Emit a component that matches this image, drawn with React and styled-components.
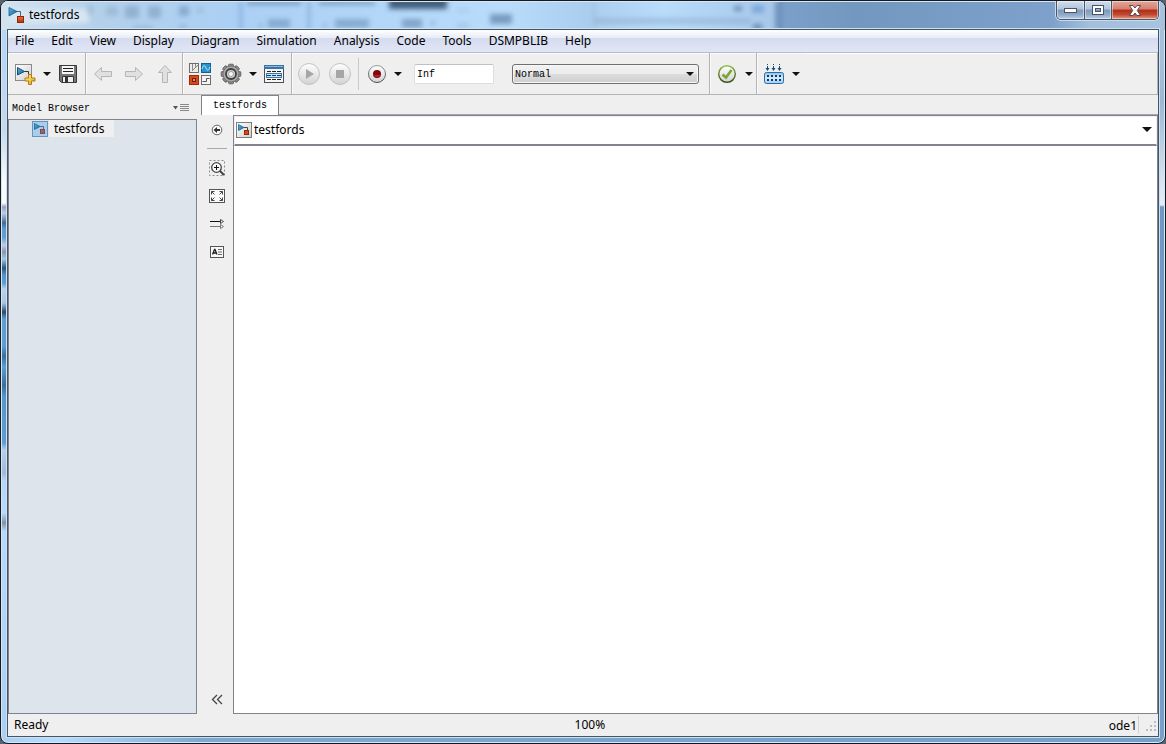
import React from "react";
import styled, { createGlobalStyle, css } from "styled-components";

const UI = `"Noto Sans", "Open Sans", sans-serif`;
const MONO = `"Liberation Mono", monospace`;
const EDGE = "#82838f";
const FACE = "#efefef";

const GlobalStyle = createGlobalStyle`
  * { box-sizing: border-box; }
  body { margin: 0; background: #5b646e; font: 12px/16px ${UI}; color: #000; }
  button, input, select { font: inherit; color: inherit; margin: 0; }
`;

const Window = styled.div`
  position: relative;
  min-height: 100vh;
  display: flex;
  flex-direction: column;
  padding: 0 6px 6px;
  border: 1px solid #17171f;
  border-radius: 8px;
  overflow: hidden;
  box-shadow: inset 0 0 0 1px #d5e8f8;
  background:
    linear-gradient(#b7d6f4 0 60px, #c4daee 130px, #fafafa 180px, #fafafa 202px, #9a9db8 206px, #b8cfe9 212px,
      #3f6c96 222px, #5c9ed4 228px, #5c9ed4 236px, #b8cfe9 244px, #8b93b0 251px, #a5c6e6 258px, #2f5679 267px,
      #5693c8 274px, #5c9ed4 282px, #b8d2ec 288px, #a8c4e2 302px, #2b4a66 311px, #5c9ed4 318px, #5c9ed4 345px,
      #3d6e99 355px, #5c9ed4 366px, #3d6e99 384px, #5596cb 396px, #5c9ed4 442px, #b7cfec 449px, #9fb9da 472px,
      #b7d6f7 480px, #b7d9fb 512px, #8292a8 522px, #b7d9fb 530px, #a9cff3) left / 7px 100% no-repeat,
    linear-gradient(#a5c0dc 0 60px, #9ab7d6 100px, #dfe8f1 190px, #e3ebf3 204px, #6f98c4 206px, #769fca) right / 7px 100% no-repeat,
    linear-gradient(90deg, #a9cff3, #b7dcff 55px, #7fa9d0 200px, #769fca) bottom / 100% 7px no-repeat,
    #a9cff3;
`;

const Backdrop = styled.svg`
  position: absolute;
  top: 0;
  left: 0;
  width: 100%;
  height: 29px;
`;

const TitleBar = styled.header`
  position: relative;
  height: 28px;
  display: flex;
  align-items: flex-start;
  justify-content: space-between;
`;

const Title = styled.h1`
  margin: 0;
  padding: 5px 0 0 1px;
  display: flex;
  align-items: center;
  gap: 4px;
  font: 12px/18px ${UI};
`;

const WindowButtons = styled.div`
  display: flex;
  height: 19px;
  border: 1px solid #4b566b;
  border-top: 0;
  border-radius: 0 0 5px 5px;
  overflow: hidden;
  box-shadow: 0 0 0 1px #c9dbec;
`;

const WindowButton = styled.button`
  width: ${(p) => (p.$close ? 47 : 27)}px;
  padding: 0;
  border: 0;
  border-left: ${(p) => (p.$first ? 0 : "1px solid #4b566b")};
  display: grid;
  place-items: center;
  background: ${(p) =>
    p.$close
      ? "linear-gradient(#e5a798, #d2806f 45%, #b32c15 50%, #c04830 75%, #e39a80)"
      : "linear-gradient(#d3dfec, #b0c4da 45%, #7e9abb 50%, #8eaac8 75%, #b9cfe4)"};
  box-shadow: inset 0 0 0 1px rgba(255, 255, 255, 0.45);
`;

const Content = styled.div`
  position: relative;
  flex: 1;
  display: flex;
  flex-direction: column;
  border: 1px solid #435566;
  background: ${FACE};
  box-shadow: 0 0 0 1px #cfe0ee;
`;

const MenuBar = styled.nav`
  height: 23px;
  display: flex;
  gap: 2px;
  border-bottom: 1px solid #b6bccc;
  background: linear-gradient(#fff, #e6ebf3 8px, #d5dbef 8px, #e1e6f6);
`;

const MenuItem = styled.button`
  padding: 0 8px 0 7px;
  border: 0;
  background: none;
  line-height: 22px;
`;

const ToolBar = styled.div`
  height: 42px;
  display: flex;
  border: 1px solid #b4b4b4;
  border-width: 0 1px 1px 0;
  box-shadow: inset 0 1px 0 #fff;
`;

const ToolGroup = styled.div`
  display: flex;
  align-items: center;
  padding: 0 1px 0 2px;
  border-right: ${(p) => (p.$last ? 0 : "1px solid #b4b4b4")};
  box-shadow: inset 1px 1px 0 #fbfbfb;
`;

const ToolButton = styled.button`
  width: ${(p) => (p.$caret ? 12 : 31)}px;
  height: 31px;
  padding: 0;
  border: 0;
  background: none;
  display: flex;
  align-items: center;
  justify-content: center;
  svg { display: block; }
`;

const ThinRule = styled.span`
  width: 1px;
  height: 32px;
  margin: 0 2px;
  background: #c9c9c9;
`;

const StopTime = styled.input`
  width: 80px;
  height: 20px;
  margin-left: 10px;
  padding: 1px 2px 0;
  border: 1px solid #dcdde2;
  border-top-color: #bfc0c8;
  border-radius: 2px;
  background: #fff;
  font: 10px/18px ${MONO};
`;

const ModeField = styled.div`
  position: relative;
  width: 187px;
  margin: 0 9px 0 18px;
  > svg { position: absolute; right: 5px; top: 8px; pointer-events: none; }
`;

const ModeSelect = styled.select`
  display: block;
  appearance: none;
  width: 100%;
  height: 20px;
  padding: 1px 2px 0;
  border: 1px solid #707070;
  border-radius: 3px;
  box-shadow: inset 0 0 0 1px #f8f8f8;
  background: linear-gradient(#f2f2f2, #ebebeb 50%, #dcdcdc 50%, #cfcfcf);
  font: 10px/18px ${MONO};
`;

const Workspace = styled.div`
  flex: 1;
  display: grid;
  grid-template-columns: 189px minmax(0, 1fr);
  column-gap: 4px;
`;

const Browser = styled.aside`
  display: flex;
  flex-direction: column;
`;

const BrowserHeader = styled.div`
  height: 24px;
  padding: 3px 8px 0 4px;
  display: flex;
  align-items: center;
  justify-content: space-between;
`;

const BrowserTitle = styled.h2`
  margin: 0;
  font: 10px/16px ${MONO};
`;

const PlainButton = styled.button`
  padding: 0 0 2px;
  border: 0;
  background: none;
  display: block;
  svg { display: block; }
`;

const Tree = styled.ul`
  flex: 1;
  margin: 0;
  padding: 0 0 0 23px;
  list-style: none;
  border: 1px solid ${EDGE};
  background: #dee4ec;
`;

const TreeItem = styled.li`
  display: flex;
  align-items: center;
  svg { display: block; }
`;

const TreeLabel = styled.span`
  margin-left: 1px;
  padding: 0 10px 0 5px;
  line-height: 17px;
  background: ${FACE};
`;

const Main = styled.main`
  display: flex;
  flex-direction: column;
`;

const TabStrip = styled.div`
  display: flex;
  height: 20px;
`;

const Tab = styled.button`
  padding: 0 11px;
  border: 1px solid ${EDGE};
  border-bottom: 0;
  background: #fff;
  font: 10px/19px ${MONO};
`;

const StripRest = styled.span`
  flex: 1;
  border-bottom: 1px solid #a5a5a8;
`;

const Editor = styled.div`
  flex: 1;
  display: flex;
`;

const Palette = styled.div`
  width: 32px;
  padding-top: 1px;
  display: flex;
  flex-direction: column;
  align-items: stretch;
`;

const PaletteButton = styled.button`
  height: 28px;
  padding: 0;
  border: 0;
  background: none;
  display: grid;
  place-items: center;
  ${(p) => p.$bottom && css`margin-top: auto;`}
`;

const PaletteRule = styled.hr`
  width: 20px;
  height: 1px;
  margin: 4px auto 5px;
  border: 0;
  background: #a9a9a9;
`;

const CanvasPane = styled.div`
  flex: 1;
  display: flex;
  flex-direction: column;
  border: 1px solid ${EDGE};
  background: #fff;
`;

const PathBar = styled.button`
  height: 30px;
  padding: 0 4px 2px 1px;
  display: flex;
  align-items: center;
  border: 1px solid #efefef;
  border-bottom: 2px solid ${EDGE};
  background: #fff;
  text-align: left;
`;

const PathName = styled.span`
  flex: 1;
  padding-left: 2px;
`;

const Canvas = styled.div`
  flex: 1;
`;

const StatusBar = styled.footer`
  height: 22px;
  padding-left: 6px;
  display: grid;
  grid-template-columns: 49% 1fr auto;
  line-height: 22px;
`;

const Solver = styled.span`
  display: flex;
  align-items: center;
  gap: 6px;
  padding-right: 1px;
`;

const SolverName = styled.span`
  height: 18px;
  padding-right: 1px;
  line-height: 20px;
  border-right: 1px solid #d0d0d0;
`;

/* ---- icons ---- */

const Caret = ({ w = 8, h = 4 }) => (
  <svg width={w} height={h} viewBox="0 0 8 4" preserveAspectRatio="none"><path d="M0 0H8L4 4Z" fill="#111" /></svg>
);

const Icon = ({ children, size = 23 }) => (
  <svg width={size} height={size} viewBox={`0 0 ${size} ${size}`} fill="none">{children}</svg>
);

const HiddenDefs = styled.svg`
  position: absolute;
`;

const Defs = () => (
  <HiddenDefs width="0" height="0" aria-hidden="true">
    <defs>
      <linearGradient id="paper" x2="1" y2="1"><stop stopColor="#fff" /><stop offset="1" stopColor="#cfcfcf" /></linearGradient>
      <linearGradient id="ball" x2="0" y2="1"><stop stopColor="#fff" /><stop offset="1" stopColor="#d2d2d2" /></linearGradient>
      <linearGradient id="blue" x2="1" y2="1"><stop stopColor="#5cb6e6" /><stop offset="1" stopColor="#12608f" /></linearGradient>
      <linearGradient id="red" x2="0" y2="1"><stop stopColor="#f0703c" /><stop offset="1" stopColor="#b83208" /></linearGradient>
      <linearGradient id="gold" x2="1" y2="1"><stop stopColor="#fff3a0" /><stop offset="1" stopColor="#e0a400" /></linearGradient>
      <linearGradient id="chip" x2="0" y2="1"><stop stopColor="#8fc0ea" /><stop offset=".5" stopColor="#d5ebfb" /><stop offset="1" stopColor="#9cccf2" /></linearGradient>
      <linearGradient id="rim" x2="0" y2="1"><stop stopColor="#9a9a9a" /><stop offset="1" stopColor="#4a4a4a" /></linearGradient>
      <linearGradient id="greenRim" x2="0" y2="1"><stop stopColor="#94bb49" /><stop offset="1" stopColor="#3c4f1c" /></linearGradient>
    </defs>
  </HiddenDefs>
);

const LogoIcon = () => (
  <svg width="17" height="17" viewBox="0 0 17 17" fill="none">
    <path d="M8 4.500H12.500V10" stroke="#4b6478" />
    <path d="M1 0.500L9 4.500L1 9Z" fill="url(#blue)" stroke="#1b5f8c" strokeWidth=".8" />
    <rect x="9.500" y="9.500" width="6" height="6" fill="url(#red)" stroke="#8d2a0c" />
  </svg>
);

const ModelIcon = ({ tint }) => (
  <svg width="16" height="16" viewBox="0 0 16 16" fill="none">
    <rect x=".5" y=".5" width="15" height="15" fill={tint ? "#a9cdea" : "url(#paper)"} stroke={tint ? "#6b93ba" : "#7d7d7d"} />
    <path d="M8 5.500H11.500V8" stroke={tint ? "#4b6b8c" : "#444"} />
    <path d="M2.500 2.500L8 5.500L2.500 8.500Z" fill="url(#blue)" stroke="#1c6a9c" strokeWidth=".8" />
    <rect x="8.500" y="8.500" width="4" height="4" fill={tint ? "#a0606a" : "#d9481a"} stroke={tint ? "#7d4a5c" : "#8d2a0c"} />
  </svg>
);

const NewIcon = () => (
  <Icon>
    <rect x="1.500" y="2.500" width="16" height="16" fill="url(#paper)" stroke="#8a8a8a" />
    <path d="M10 9.500H14.500V12" stroke="#333" />
    <path d="M3.500 5.500L10.500 9.500L3.500 13Z" fill="url(#blue)" stroke="#14507c" />
    <path d="M14.500 12.500h3v3.500h3.500v3h-3.500v3.500h-3v-3.500h-3.500v-3h3.500z" fill="url(#gold)" stroke="#b17b14" />
  </Icon>
);

const SaveIcon = () => (
  <Icon>
    <path d="M2.500 3.500H19.500V20.500H4.500L2.500 18.500Z" fill="#777" stroke="#3a3a3a" />
    <rect x="5" y="4" width="12" height="8" fill="#f6f6f6" />
    <path d="M6 6.500H16M6 9.500H16" stroke="#222" />
    <path d="M5.500 20V14.500H16.500V20" fill="#eee" stroke="#333" />
    <rect x="8" y="15" width="3" height="6" fill="#333" />
  </Icon>
);

const ArrowIcon = ({ turn = 0 }) => (
  <Icon>
    <path transform={`rotate(${turn} 11 12)`} d="M2.500 12L9.500 5.500V9.500H19.500V14.500H9.500V18.500Z" fill="#e0e0e0" stroke="#b6b6b6" />
  </Icon>
);

const LibraryIcon = () => (
  <Icon>
    <rect x=".5" y="1.500" width="9" height="9" fill="#ececec" stroke="#6d6d6d" />
    <path d="M3.500 2V8M6.500 2V6M3 9L9 3" stroke="#8a8a8a" />
    <rect x="12.500" y="1.500" width="9" height="9" fill="#2794cf" stroke="#14608f" />
    <path d="M13 7C14.500 2 16 3.500 17 6S19.500 9.500 21 5" stroke="#c8ecff" />
    <rect x=".5" y="13.500" width="9" height="9" fill="#d8481b" stroke="#9c2d0a" />
    <rect x="3.500" y="16.500" width="3" height="3" fill="#f08a5c" stroke="#6d1d04" />
    <rect x="12.500" y="13.500" width="9" height="9" fill="#f4f4f4" stroke="#6d6d6d" />
    <path d="M13.500 19.500H17.500V16.500H20.500" stroke="#555" />
  </Icon>
);

const GearIcon = () => (
  <Icon>
    <g fill="#8c8c8c" stroke="#505050" strokeWidth=".8">
      {[0, 45, 90, 135].map((a) => (
        <rect key={a} x="8.500" y="2.200" width="5" height="19.600" rx="1" transform={`rotate(${a} 11 12)`} />
      ))}
    </g>
    <circle cx="11" cy="12" r="8" fill="#a9a9a9" stroke="#6a6a6a" strokeWidth=".8" />
    <circle cx="11" cy="12" r="5" fill="#d4d4d4" stroke="#3e3e3e" strokeWidth="1.800" />
    <circle cx="11" cy="12" r="2.500" fill="#fafafa" stroke="#8a8a8a" strokeWidth=".8" />
  </Icon>
);

const ExplorerIcon = () => (
  <Icon>
    <rect x="1.500" y="3.500" width="19" height="17" fill="#f5f5f5" stroke="#4b5058" />
    <rect x="1" y="3" width="20" height="4" fill="#3b74a8" />
    <path d="M2 4.500H20" stroke="#86b6dc" />
    <path d="M4 9.500H18M4 17.500H18" stroke="#222" strokeDasharray="4 1" />
    <rect x="3.500" y="11.500" width="15" height="4" fill="#cfe6f8" stroke="#3878ac" />
    <path d="M4 13.500H18" stroke="#123f66" strokeDasharray="4 1" />
  </Icon>
);

const RoundIcon = ({ stop }) => (
  <Icon>
    <circle cx="11" cy="12" r="10.500" fill="url(#ball)" stroke="#c2c2c2" />
    {stop ? <rect x="7" y="8" width="8" height="8" fill="#a6a6a6" /> : <path d="M8 7L16 12L8 17Z" fill="#a6a6a6" />}
  </Icon>
);

const RecordIcon = () => (
  <Icon>
    <circle cx="12" cy="12" r="8.500" fill="url(#ball)" stroke="url(#rim)" />
    <circle cx="12" cy="12" r="4" fill="#7a0a10" />
    <path d="M8.500 13A4 4 0 0 0 15.500 13Z" fill="#d11a22" />
  </Icon>
);

const CheckIcon = () => (
  <Icon>
    <circle cx="11" cy="12" r="8.300" fill="url(#ball)" stroke="url(#greenRim)" strokeWidth="1.500" />
    <path d="M6.500 12.500L10 15.500L15.500 8" stroke="#7ba636" strokeWidth="2.600" />
  </Icon>
);

const BuildIcon = () => (
  <Icon>
    <g fill="#174c7c">
      {[4.5, 10.5, 16.5].map((x) => (
        <path key={x} d={`M${x - 0.5} 2h1v1h-1zM${x - 0.5} 4h1v2h1.500L${x} 9L${x - 2} 6h1.500z`} />
      ))}
    </g>
    <rect x="1.500" y="10.500" width="19" height="11" rx="2" fill="url(#chip)" stroke="#2c6ca5" />
    <path d="M4 14H18M4 18H18" stroke="#0f3c68" strokeWidth="2" strokeDasharray="2 2" />
  </Icon>
);

const HideIcon = () => (
  <Icon size={12}>
    <circle cx="6" cy="6" r="4.800" fill="#fafafa" stroke="#666" />
    <path d="M2.500 6L6 3V5H9V7H6V9Z" fill="#333" />
  </Icon>
);

const ZoomIcon = () => (
  <Icon size={16}>
    <rect x=".5" y=".5" width="15" height="15" stroke="#8c8c8c" strokeDasharray="2 2" />
    <path d="M10.500 10.500L15 15" stroke="#444" strokeWidth="2" />
    <circle cx="7.500" cy="7.500" r="4.800" fill="#f8f8f8" stroke="#444" strokeWidth="1.300" />
    <path d="M5 7.500H10M7.500 5V10" stroke="#111" />
  </Icon>
);

const FitIcon = () => (
  <Icon size={16}>
    <rect x=".5" y="1.500" width="15" height="13" fill="#fafafa" stroke="#555" />
    <path d="M2.500 6.500V3.500H5.500M2.500 3.500L5.500 6.500M10.500 3.500H13.500V6.500M13.500 3.500L10.500 6.500M2.500 9.500V12.500H5.500M2.500 12.500L5.500 9.500M10.500 12.500H13.500V9.500M13.500 12.500L10.500 9.500" stroke="#444" />
  </Icon>
);

const SignalIcon = () => (
  <Icon size={16}>
    <path d="M1 5.500H12" stroke="#111" />
    <path d="M1 10.500H12" stroke="#777" />
    <path d="M11.500 3.500L14.500 5.500L11.500 7.500Z" fill="#fff" stroke="#444" />
    <path d="M11.500 8.500L14.500 10.500L11.500 12.500Z" fill="#fff" stroke="#777" />
  </Icon>
);

const AnnotationIcon = () => (
  <Icon size={16}>
    <rect x="1.500" y="2.500" width="13" height="11" fill="#fafafa" stroke="#555" />
    <path d="M3.500 10.500L5.500 5.500H6L8 10.500M4.500 9H7" stroke="#222" strokeWidth="1.300" />
    <path d="M9 5.500H13M9 8H13M9 10.500H13" stroke="#666" />
  </Icon>
);

const CollapseIcon = () => (
  <Icon size={12}>
    <path d="M6 1L1.500 5.500L6 10M11 1L6.500 5.500L11 10" stroke="#444" strokeWidth="1.300" />
  </Icon>
);

const ListMenuIcon = () => (
  <svg width="16" height="8" viewBox="0 0 16 8" fill="none">
    <path d="M0 2H5L2.500 5.500Z" fill="#555" />
    <path d="M7 .5H16M7 2.500H16M7 4.500H16M7 6.500H16" stroke="#888" />
  </svg>
);

const Grip = () => (
  <svg width="12" height="12" viewBox="0 0 12 12" fill="#bdbdbd">
    <path d="M9 2h2v2h-2zM9 6h2v2h-2zM5 6h2v2h-2zM9 10h2v2h-2zM5 10h2v2h-2zM1 10h2v2h-2z" />
  </svg>
);

const GlassBackdrop = () => (
  <Backdrop aria-hidden="true">
    <defs>
      <filter id="soft" x="-50%" y="-80%" width="200%" height="260%"><feGaussianBlur stdDeviation="2.500" /></filter>
      <linearGradient id="glass"><stop stopColor="#d3e2ef" /><stop offset=".12" stopColor="#b4d0ea" /><stop offset=".3" stopColor="#abd0f4" /><stop offset=".65" stopColor="#b9dcfb" /><stop offset=".75" stopColor="#abcdee" /><stop offset=".85" stopColor="#b9dcfb" /><stop offset="1" stopColor="#a5c6e8" /></linearGradient>
      <linearGradient id="glassRight"><stop stopColor="#7ba1ca" /><stop offset=".2" stopColor="#7298c0" /><stop offset=".7" stopColor="#7da1ca" /><stop offset=".8" stopColor="#a3bfdc" /><stop offset="1" stopColor="#a9c3dd" /></linearGradient>
    </defs>
    <rect width="780" height="29" fill="url(#glass)" />
    <rect x="778" width="388" height="29" fill="url(#glassRight)" />
    <rect x="1166" width="100%" height="29" fill="#a9c3dd" />
    <g filter="url(#soft)">
      <rect x="8" y="8" width="80" height="14" fill="#d8e6f2" />
      <g opacity=".6">
        <rect x="86" y="4" width="6" height="10" fill="#90b0ce" />
        <rect x="105" y="5" width="12" height="10" fill="#90b0ce" />
        <rect x="124" y="5" width="14" height="12" fill="#7d9dbd" />
        <rect x="147" y="5" width="13" height="12" fill="#7d9dbd" />
        <rect x="178" y="5" width="10" height="10" fill="#6f95bb" />
        <rect x="196" y="7" width="6" height="4" fill="#86a7c8" />
        <rect x="132" y="25" width="20" height="4" fill="#86a7c8" />
        <rect x="178" y="24" width="8" height="5" fill="#86a7c8" />
        <rect x="238" y="0" width="4" height="29" fill="#7ba5d3" />
        <rect x="267" y="18" width="22" height="9" fill="#6d91b8" />
        <rect x="258" y="22" width="3" height="4" fill="#6d91b8" />
        <rect x="306" y="0" width="4" height="29" fill="#7ba5d3" />
        <rect x="246" y="0" width="54" height="4" fill="#557a9f" />
        <rect x="318" y="0" width="56" height="4" fill="#557a9f" />
        <rect x="334" y="18" width="34" height="9" fill="#6d91b8" />
        <rect x="322" y="23" width="4" height="3" fill="#6d91b8" />
        <rect x="401" y="18" width="20" height="9" fill="#5f83a9" />
        <rect x="430" y="20" width="4" height="4" fill="#6d91b8" />
        <rect x="456" y="8" width="12" height="3" fill="#9bbbdc" />
        <rect x="456" y="22" width="12" height="5" fill="#9bbbdc" />
        <rect x="489" y="13" width="22" height="10" fill="#4e7399" />
        <rect x="592" y="0" width="2" height="29" fill="#8fb0cf" />
        <rect x="594" y="17" width="156" height="6" fill="#8fb0cf" />
        <rect x="733" y="5" width="8" height="5" fill="#44658a" />
        <rect x="751" y="4" width="12" height="8" fill="#5f92cf" />
        <rect x="752" y="23" width="9" height="6" fill="#44658a" />
      </g>
      <rect x="388" y="-3" width="58" height="11" fill="#2f4b68" opacity=".85" />
      <rect x="774" y="0" width="8" height="29" fill="#6f93bd" />
    </g>
    <rect width="100%" height="1" fill="#d8e8f6" />
  </Backdrop>
);

const MENUS = ["File", "Edit", "View", "Display", "Diagram", "Simulation", "Analysis", "Code", "Tools", "DSMPBLIB", "Help"];

const Tool = ({ label, children }) => <ToolButton aria-label={label}>{children}</ToolButton>;
const More = ({ label }) => <ToolButton $caret aria-label={label}><Caret /></ToolButton>;

export default function App() {
  return (
    <>
      <GlobalStyle />
      <Defs />
      <Window>
        <GlassBackdrop />
        <TitleBar>
          <Title><LogoIcon />testfords</Title>
          <WindowButtons>
            <WindowButton $first aria-label="Minimize">
              <svg width="13" height="5"><rect x=".5" y=".5" width="12" height="4" fill="#fff" stroke="#4a5266" /></svg>
            </WindowButton>
            <WindowButton aria-label="Maximize">
              <svg width="12" height="10" fill="none"><rect x="2" y="2" width="8" height="6" stroke="#fff" strokeWidth="3" /><rect x=".5" y=".5" width="11" height="9" stroke="#4a5266" /><rect x="3.500" y="3.500" width="5" height="3" stroke="#4a5266" /></svg>
            </WindowButton>
            <WindowButton $close aria-label="Close">
              <svg width="12" height="11" viewBox="0 0 12 11"><path d="M.5 .5H4L6 3L8 .5H11.500L8.300 5.500L11.500 10.500H8L6 8L4 10.500H.5L3.700 5.500Z" fill="#fff" stroke="#5b4651" /></svg>
            </WindowButton>
          </WindowButtons>
        </TitleBar>
        <Content>
          <MenuBar>{MENUS.map((m) => <MenuItem key={m}>{m}</MenuItem>)}</MenuBar>
          <ToolBar>
            <ToolGroup>
              <Tool label="New model"><NewIcon /></Tool>
              <More label="New options" />
              <Tool label="Save"><SaveIcon /></Tool>
            </ToolGroup>
            <ToolGroup>
              <Tool label="Back"><ArrowIcon /></Tool>
              <Tool label="Forward"><ArrowIcon turn={180} /></Tool>
              <Tool label="Up"><ArrowIcon turn={90} /></Tool>
            </ToolGroup>
            <ToolGroup>
              <Tool label="Library browser"><LibraryIcon /></Tool>
              <Tool label="Model configuration"><GearIcon /></Tool>
              <More label="Configuration options" />
              <Tool label="Model explorer"><ExplorerIcon /></Tool>
            </ToolGroup>
            <ToolGroup>
              <Tool label="Run"><RoundIcon /></Tool>
              <Tool label="Stop"><RoundIcon stop /></Tool>
              <ThinRule />
              <Tool label="Record"><RecordIcon /></Tool>
              <More label="Record options" />
              <StopTime aria-label="Stop time" defaultValue="Inf" />
              <ModeField>
                <ModeSelect aria-label="Simulation mode" defaultValue="Normal"><option>Normal</option></ModeSelect>
                <Caret />
              </ModeField>
            </ToolGroup>
            <ToolGroup>
              <Tool label="Model advisor"><CheckIcon /></Tool>
              <More label="Advisor options" />
            </ToolGroup>
            <ToolGroup $last>
              <Tool label="Build"><BuildIcon /></Tool>
              <More label="Build options" />
            </ToolGroup>
          </ToolBar>
          <Workspace>
            <Browser>
              <BrowserHeader>
                <BrowserTitle>Model Browser</BrowserTitle>
                <PlainButton aria-label="Browser menu"><ListMenuIcon /></PlainButton>
              </BrowserHeader>
              <Tree>
                <TreeItem><ModelIcon tint /><TreeLabel>testfords</TreeLabel></TreeItem>
              </Tree>
            </Browser>
            <Main>
              <TabStrip><Tab>testfords</Tab><StripRest /></TabStrip>
              <Editor>
                <Palette>
                  <PaletteButton aria-label="Hide browser"><HideIcon /></PaletteButton>
                  <PaletteRule />
                  <PaletteButton aria-label="Zoom"><ZoomIcon /></PaletteButton>
                  <PaletteButton aria-label="Fit to view"><FitIcon /></PaletteButton>
                  <PaletteButton aria-label="Signals"><SignalIcon /></PaletteButton>
                  <PaletteButton aria-label="Annotation"><AnnotationIcon /></PaletteButton>
                  <PaletteButton $bottom aria-label="Collapse palette"><CollapseIcon /></PaletteButton>
                </Palette>
                <CanvasPane>
                  <PathBar><ModelIcon /><PathName>testfords</PathName><Caret w={10} h={5} /></PathBar>
                  <Canvas />
                </CanvasPane>
              </Editor>
            </Main>
          </Workspace>
          <StatusBar>
            <span>Ready</span>
            <span>100%</span>
            <Solver><SolverName>ode1</SolverName><Grip /></Solver>
          </StatusBar>
        </Content>
      </Window>
    </>
  );
}
